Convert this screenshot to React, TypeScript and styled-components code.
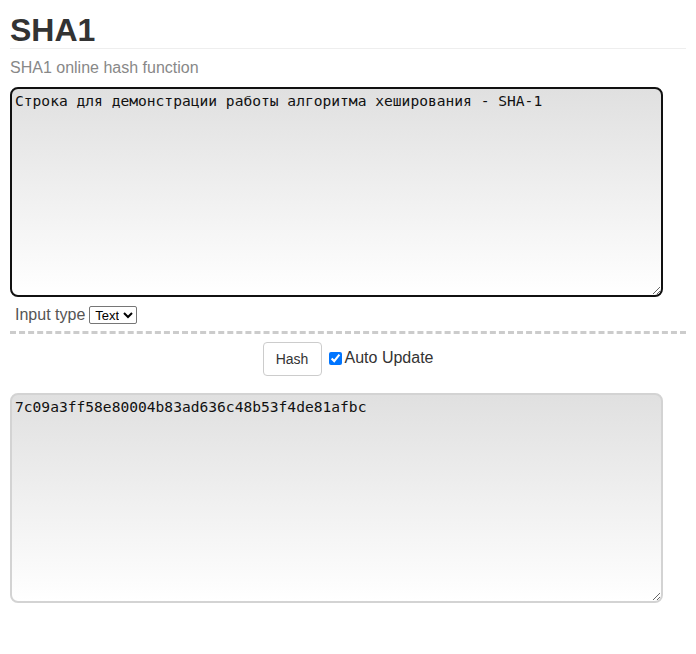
import React, { useState } from "react";
import styled, { createGlobalStyle } from "styled-components";

const Global = createGlobalStyle`
  html, body { margin: 0; padding: 0; background: #fff; }
  body { font-family: "Liberation Sans", Arial, sans-serif; color: #333; }
`;

const Page = styled.div`
  padding: 0 10px;
  display: flex;
  flex-direction: column;
`;

const Title = styled.h1`
  margin: 12px 0 0;
  font-size: 32px;
  line-height: 36px;
  font-weight: bold;
  color: #333;
  border-bottom: 1px solid #eee;
`;

const Subtitle = styled.div`
  margin-top: 10px;
  font-size: 16px;
  line-height: 18px;
  color: #888;
`;

const Area = styled.textarea<{ $focused?: boolean }>`
  box-sizing: border-box;
  width: 653px;
  height: 210px;
  margin: 0;
  padding: 3px 3px;
  border: 2px solid ${(p) => (p.$focused ? "#111" : "#d3d3d3")};
  border-radius: 8px;
  background: linear-gradient(to bottom, #e0e0e0, #ffffff);
  font-family: "DejaVu Sans Mono", "Liberation Mono", monospace;
  font-size: 14.6px;
  line-height: 17px;
  color: #111;
  outline: none;
  resize: both;
`;

const InputArea = styled(Area)`
  margin-top: 10px;
`;

const OutputArea = styled(Area)`
  margin-top: 17px;
`;

const TypeRow = styled.div`
  display: flex;
  align-items: center;
  gap: 4px;
  margin-top: 8px;
  padding-left: 5px;
  font-size: 16px;
  color: #555;
  height: 19px;
`;

const Select = styled.select`
  font-family: "Liberation Sans", Arial, sans-serif;
  font-size: 13px;
  height: 18px;
  padding: 0 1px;
  border: 1px solid #767676;
  border-radius: 2px;
  background: #fff;
  color: #000;
`;

const Divider = styled.div`
  margin-top: 7px;
  border-top: 3px dashed #ccc;
`;

const ActionRow = styled.div`
  display: flex;
  justify-content: center;
  align-items: center;
  gap: 7px;
  margin-top: 8px;
`;

const Button = styled.button`
  box-sizing: border-box;
  width: 59px;
  height: 34px;
  background: #fff;
  border: 1px solid #ccc;
  border-radius: 4px;
  font-family: "Liberation Sans", Arial, sans-serif;
  font-size: 14px;
  color: #333;
`;

const CheckLabel = styled.label`
  display: flex;
  align-items: center;
  gap: 3px;
  font-size: 16px;
  color: #333;
  margin-top: -2px;
`;

const Check = styled.input`
  margin: 0;
  width: 13px;
  height: 13px;
  accent-color: #0075ff;
`;

export default function App() {
  const [input, setInput] = useState(
    "Строка для демонстрации работы алгоритма хеширования - SHA-1"
  );
  return (
    <>
      <Global />
      <Page>
        <Title>SHA1</Title>
        <Subtitle>SHA1 online hash function</Subtitle>
        <InputArea $focused value={input} onChange={(e) => setInput(e.target.value)} />
        <TypeRow>
          Input type
          <Select defaultValue="text">
            <option value="text">Text</option>
            <option value="hex">Hex</option>
          </Select>
        </TypeRow>
        <Divider />
        <ActionRow>
          <Button>Hash</Button>
          <CheckLabel>
            <Check type="checkbox" defaultChecked />
            Auto Update
          </CheckLabel>
        </ActionRow>
        <OutputArea readOnly value="7c09a3ff58e80004b83ad636c48b53f4de81afbc" />
      </Page>
    </>
  );
}
